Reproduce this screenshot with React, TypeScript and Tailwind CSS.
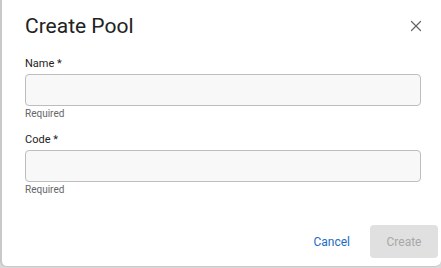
import { X } from 'lucide-react';

function Field({ label }: { label: string }) {
    return (
        <div className="flex flex-col">
            <label className="text-[11px] leading-[14px] text-[#222]">{label} *</label>
            <input className="mt-[3px] h-[32px] w-[396px] rounded-[4px] border border-[#bdbdbd] bg-[#f8f8f8] px-2 outline-none" />
            <span className="mt-[1px] text-[10px] leading-[14px] text-[#666]">Required</span>
        </div>
    );
}

export default function App() {
    return (
        <div className="h-[268px] w-[441px] bg-[#d9d9d9] font-['Roboto',sans-serif]">
            <div className="flex h-[267px] w-[441px] flex-col rounded-b-[6px] border-l-2 border-b border-[#c8c8c8] bg-white">
                <div className="flex items-center justify-between pl-[23px] pr-[16px] pt-[12px]">
                    <h1 className="text-[21px] leading-[28px] text-[#222]">Create Pool</h1>
                    <button className="text-[#666]" title="Close">
                        <X size={18} strokeWidth={1.6} />
                    </button>
                </div>
                <div className="mt-[17px] flex flex-col gap-[12px] pl-[23px]">
                    <Field label="Name" />
                    <Field label="Code" />
                </div>
                <div className="mt-auto flex items-center justify-end gap-[20px] pb-[8px] pr-[3px]">
                    <button className="text-[12px] text-[#1a6cc4]">Cancel</button>
                    <button className="h-[33px] w-[68px] rounded-[4px] bg-[#e0e0e0] text-[12px] text-[#a8a8a8]">Create</button>
                </div>
            </div>
        </div>
    );
}
